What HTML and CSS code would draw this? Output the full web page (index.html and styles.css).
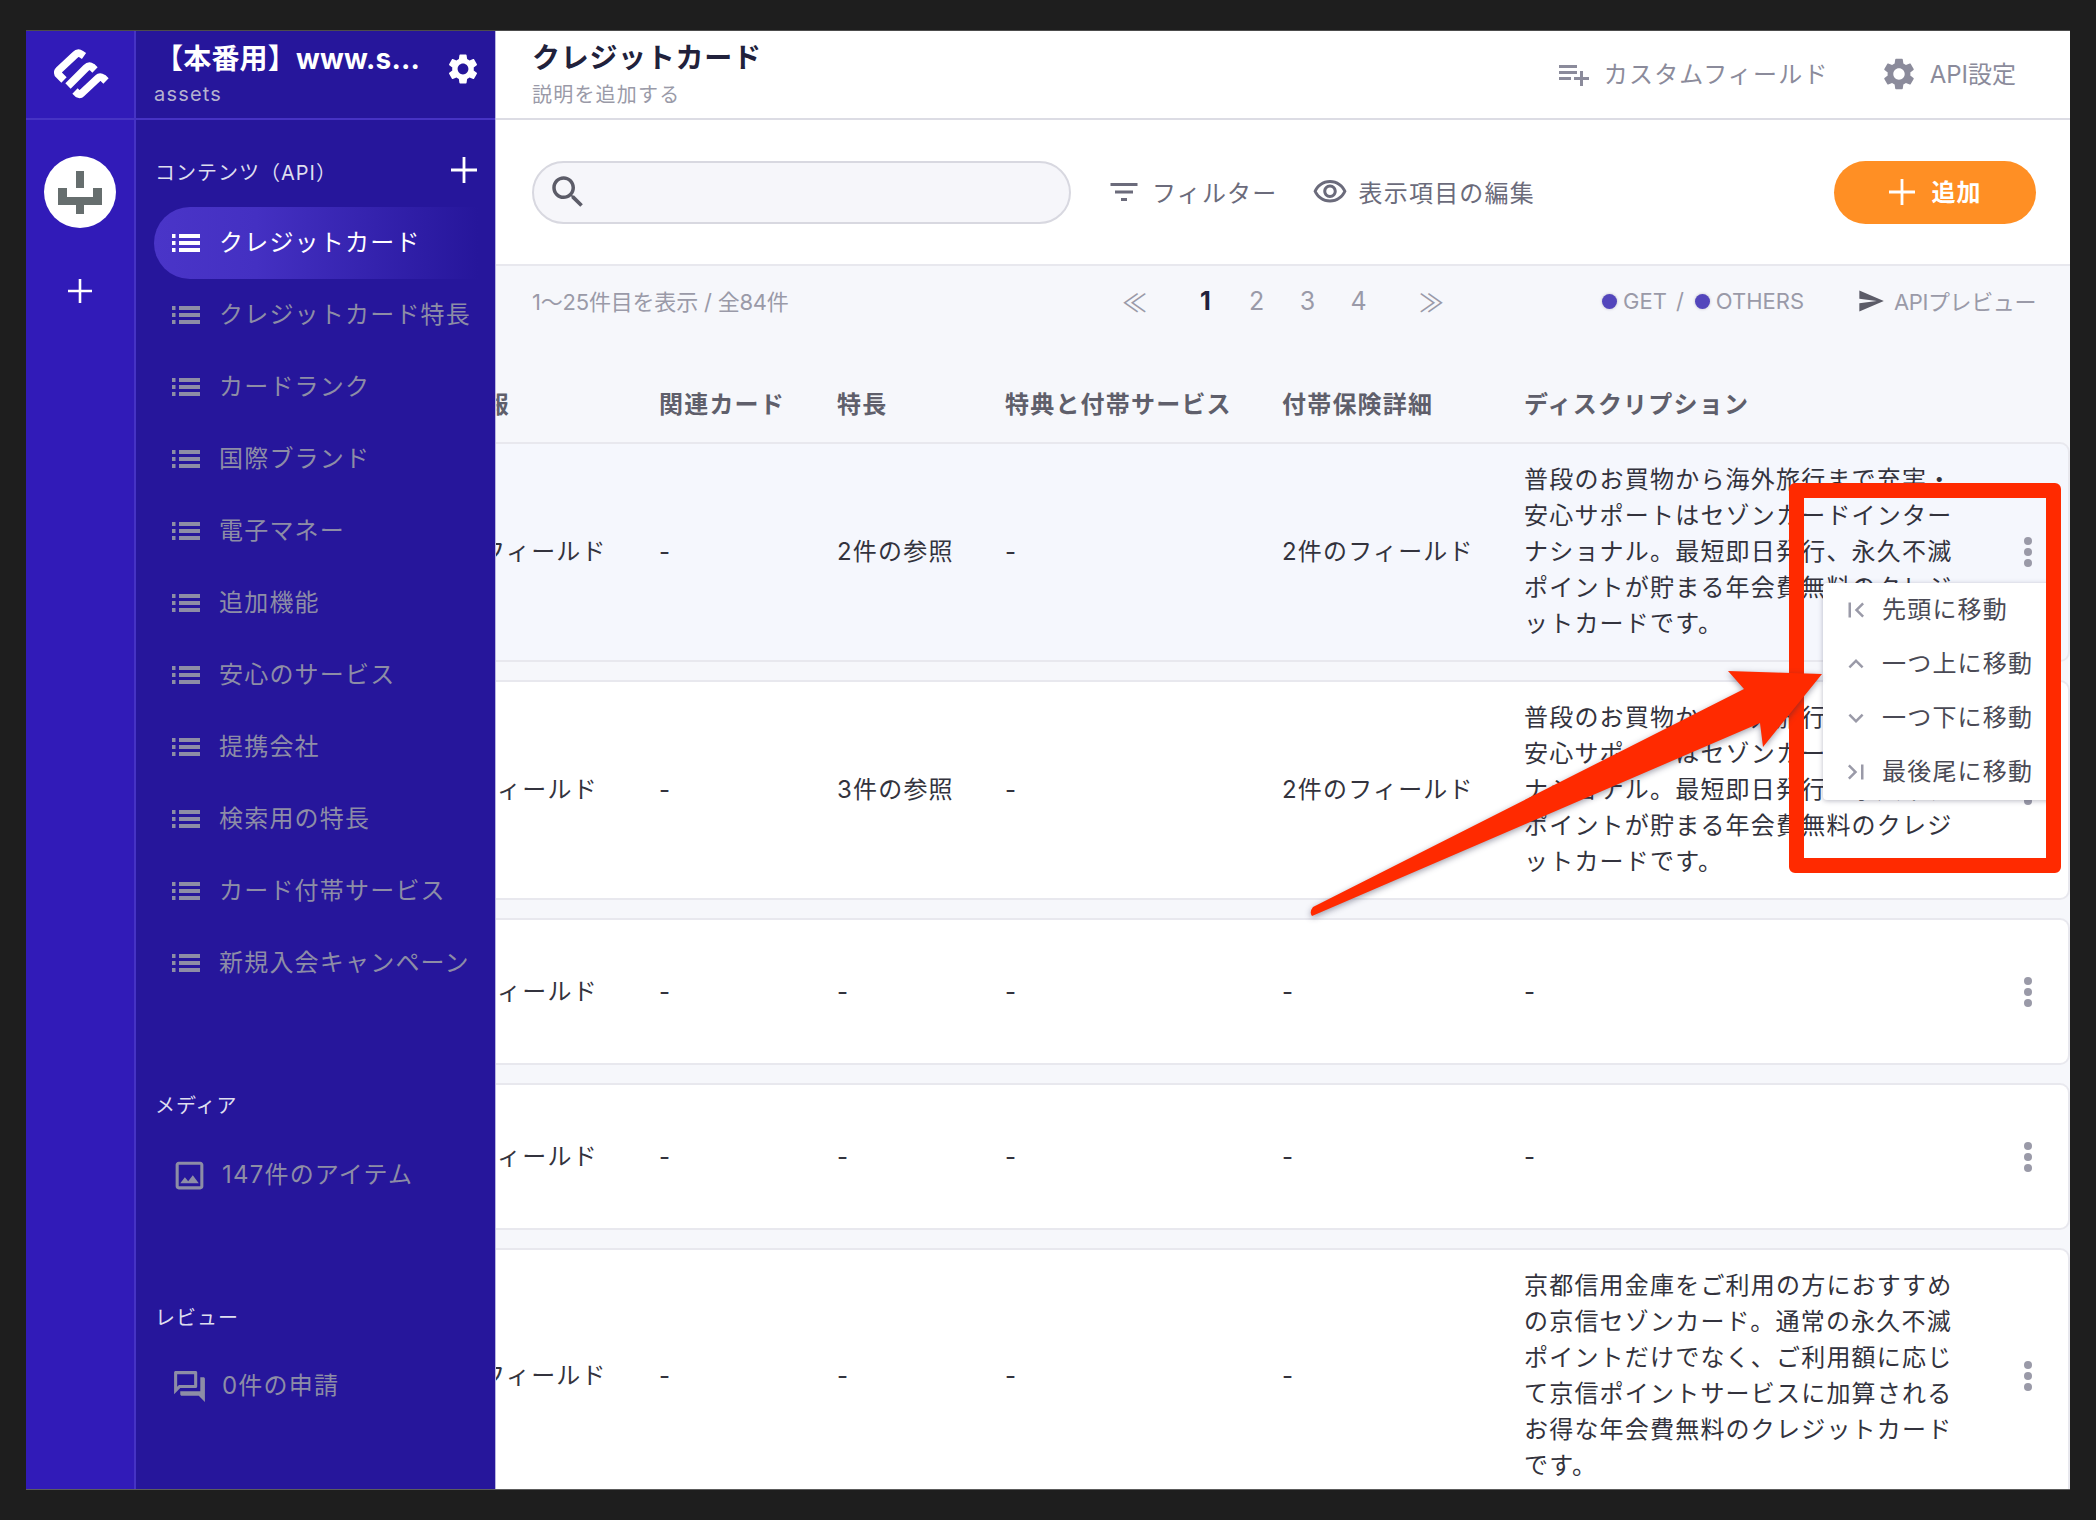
FILE: index.html
```html
<!DOCTYPE html>
<html lang="ja">
<head>
  <meta charset="UTF-8">
  <meta name="viewport" content="width=device-width, initial-scale=1.0">
  <title>クレジットカード</title>
  <link rel="stylesheet" href="styles.css">
</head>
<body>

  <svg class="sprite" aria-hidden="true">
    <symbol id="i-gear" viewBox="0 0 24 24"><path d="M19.14 12.94c.04-.3.06-.61.06-.94 0-.32-.02-.64-.07-.94l2.03-1.58c.18-.14.23-.41.12-.61l-1.92-3.32c-.12-.22-.37-.29-.59-.22l-2.39.96c-.5-.38-1.03-.7-1.62-.94l-.36-2.54c-.04-.24-.24-.41-.48-.41h-3.84c-.24 0-.43.17-.47.41l-.36 2.54c-.59.24-1.13.57-1.62.94l-2.39-.96c-.22-.08-.47 0-.59.22L2.74 8.87c-.12.21-.08.47.12.61l2.03 1.58c-.05.3-.09.63-.09.94s.02.64.07.94l-2.03 1.58c-.18.14-.23.41-.12.61l1.92 3.32c.12.22.37.29.59.22l2.39-.96c.5.38 1.03.7 1.62.94l.36 2.54c.05.24.24.41.48.41h3.84c.24 0 .44-.17.47-.41l.36-2.54c.59-.24 1.13-.56 1.62-.94l2.39.96c.22.08.47 0 .59-.22l1.92-3.32c.12-.22.07-.47-.12-.61l-2.01-1.58zM12 15.6c-1.98 0-3.6-1.62-3.6-3.6s1.62-3.6 3.6-3.6 3.6 1.62 3.6 3.6-1.62 3.6-3.6 3.6z"/></symbol>
    <symbol id="i-list" viewBox="0 0 28 18"><path d="M0 0h3.5v4H0zM7 0h21v4H7zM0 7h3.5v4H0zM7 7h21v4H7zM0 14h3.5v4H0zM7 14h21v4H7z"/></symbol>
    <symbol id="i-plus" viewBox="0 0 24 24"><path d="M10.7 0h2.6v10.7H24v2.6H13.3V24h-2.6V13.3H0v-2.6h10.7z"/></symbol>
    <symbol id="i-search" viewBox="0 0 24 24"><path d="M15.5 14h-.79l-.28-.27C15.41 12.59 16 11.11 16 9.5 16 5.91 13.09 3 9.5 3S3 5.91 3 9.5 5.91 16 9.5 16c1.61 0 3.09-.59 4.23-1.57l.27.28v.79l5 4.99L20.49 19l-4.99-5zm-6 0C7.01 14 5 11.99 5 9.5S7.01 5 9.5 5 14 7.01 14 9.5 11.99 14 9.5 14z"/></symbol>
    <symbol id="i-filter" viewBox="0 0 24 24"><path d="M10 18h4v-2h-4v2zM3 6v2h18V6H3zm3 7h12v-2H6v2z"/></symbol>
    <symbol id="i-eye" viewBox="0 0 24 24"><path d="M12 6c3.79 0 7.17 2.13 8.82 5.5C19.17 14.87 15.79 17 12 17s-7.17-2.13-8.82-5.5C4.83 8.13 8.21 6 12 6m0-2C7 4 2.73 7.11 1 11.5 2.73 15.89 7 19 12 19s9.27-3.11 11-7.5C21.27 7.11 17 4 12 4zm0 5c1.38 0 2.5 1.12 2.5 2.5S13.38 14 12 14s-2.5-1.12-2.5-2.5S10.62 9 12 9m0-2c-2.48 0-4.5 2.02-4.5 4.5S9.52 16 12 16s4.5-2.02 4.5-4.5S14.48 7 12 7z"/></symbol>
    <symbol id="i-send" viewBox="0 0 24 24"><path d="M2.01 21L23 12 2.01 3 2 10l15 2-15 2z"/></symbol>
    <symbol id="i-field" viewBox="0 0 24 24"><path d="M14 10H2v2h12v-2zm0-4H2v2h12V6zm4 8v-4h-2v4h-4v2h4v4h2v-4h4v-2h-4zM2 16h8v-2H2v2z"/></symbol>
    <symbol id="i-image" viewBox="0 0 24 24"><path d="M19 5v14H5V5h14m0-2H5c-1.1 0-2 .9-2 2v14c0 1.1.9 2 2 2h14c1.1 0 2-.9 2-2V5c0-1.1-.9-2-2-2zm-4.86 8.86l-3 3.87L9 13.14 6 17h12l-3.86-5.14z"/></symbol>
    <symbol id="i-forum" viewBox="0 0 24 24"><path d="M15 4v7H5.17L4 12.17V4h11m1-2H3c-.55 0-1 .45-1 1v14l4-4h10c.55 0 1-.45 1-1V3c0-.55-.45-1-1-1zm5 4h-2v9H6v2c0 .55.45 1 1 1h11l4 4V7c0-.55-.45-1-1-1z"/></symbol>
    <symbol id="i-first" viewBox="0 0 24 24"><path d="M18.41 16.59L13.82 12l4.59-4.59L17 6l-6 6 6 6zM6 6h2v12H6z"/></symbol>
    <symbol id="i-up" viewBox="0 0 24 24"><path d="M7.41 15.41L12 10.83l4.59 4.58L18 14l-6-6-6 6z"/></symbol>
    <symbol id="i-down" viewBox="0 0 24 24"><path d="M7.41 8.59L12 13.17l4.59-4.58L18 10l-6 6-6-6z"/></symbol>
    <symbol id="i-last" viewBox="0 0 24 24"><path d="M5.59 7.41L10.18 12l-4.59 4.59L7 18l6-6-6-6zM16 6h2v12h-2z"/></symbol>
    <symbol id="i-dots" viewBox="0 0 8 30"><circle cx="4" cy="4" r="4"/><circle cx="4" cy="15" r="4"/><circle cx="4" cy="26" r="4"/></symbol>
  </svg>

  <div class="window">

    <!-- service rail -->
    <aside class="rail">
      <div class="rail-logo">
        <svg class="logo" viewBox="0 0 60 60" fill="none" stroke="#fff" stroke-width="7.5">
          <path d="M14 35 L8 29 Q7 27 9 25 L25 10 Q28 7 31 9 L34 11"/>
          <path d="M18 41 L36 23 Q39 20 42 22 L45 25"/>
          <path d="M25 46 L28 49 Q30 50 32 48 L48 33 Q50 31 53 33 L56 36"/>
        </svg>
      </div>
      <div class="avatar">
        <svg viewBox="0 0 44 44" fill="#666e6e"><path d="M18 1h8v17h-8zM0 18h9v9h26v-9h9v17H26v9h-8v-9H0z"/></svg>
      </div>
      <svg class="rail-plus icon"><use href="#i-plus"/></svg>
    </aside>

    <!-- api list -->
    <aside class="panel">
      <div class="panel-head">
        <div class="panel-title">
          <div class="service-name">【本番用】www.s...</div>
          <div class="service-sub">assets</div>
        </div>
        <svg class="panel-gear icon"><use href="#i-gear"/></svg>
      </div>

      <div class="section-label section-first">
        <span>コンテンツ（API）</span>
        <svg class="section-plus icon"><use href="#i-plus"/></svg>
      </div>
      <ul class="nav">
        <li class="nav-item active"><svg class="nav-icon icon"><use href="#i-list"/></svg>クレジットカード</li>
        <li class="nav-item"><svg class="nav-icon icon"><use href="#i-list"/></svg>クレジットカード特長</li>
        <li class="nav-item"><svg class="nav-icon icon"><use href="#i-list"/></svg>カードランク</li>
        <li class="nav-item"><svg class="nav-icon icon"><use href="#i-list"/></svg>国際ブランド</li>
        <li class="nav-item"><svg class="nav-icon icon"><use href="#i-list"/></svg>電子マネー</li>
        <li class="nav-item"><svg class="nav-icon icon"><use href="#i-list"/></svg>追加機能</li>
        <li class="nav-item"><svg class="nav-icon icon"><use href="#i-list"/></svg>安心のサービス</li>
        <li class="nav-item"><svg class="nav-icon icon"><use href="#i-list"/></svg>提携会社</li>
        <li class="nav-item"><svg class="nav-icon icon"><use href="#i-list"/></svg>検索用の特長</li>
        <li class="nav-item"><svg class="nav-icon icon"><use href="#i-list"/></svg>カード付帯サービス</li>
        <li class="nav-item"><svg class="nav-icon icon"><use href="#i-list"/></svg>新規入会キャンペーン</li>
      </ul>

      <div class="section-label section-media"><span>メディア</span></div>
      <div class="nav-item nav-extra"><svg class="extra-icon icon"><use href="#i-image"/></svg>147件のアイテム</div>

      <div class="section-label section-review"><span>レビュー</span></div>
      <div class="nav-item nav-extra nav-review"><svg class="extra-icon icon"><use href="#i-forum"/></svg>0件の申請</div>
    </aside>

    <main class="main">
      <header class="topbar">
        <div>
          <h1 class="page-title">クレジットカード</h1>
          <div class="page-sub">説明を追加する</div>
        </div>
        <div class="top-links">
          <span class="top-link"><svg class="icon-36 icon"><use href="#i-field"/></svg>カスタムフィールド</span>
          <span class="top-link top-api"><svg class="icon-38 icon"><use href="#i-gear"/></svg>API設定</span>
        </div>
      </header>

      <div class="toolbar">
        <div class="search"><svg class="search-icon icon"><use href="#i-search"/></svg></div>
        <span class="tool tool-filter"><svg class="icon-36 icon"><use href="#i-filter"/></svg>フィルター</span>
        <span class="tool tool-eye"><svg class="icon-36 icon"><use href="#i-eye"/></svg>表示項目の編集</span>
        <button class="add-btn" type="button"><svg class="add-plus icon"><use href="#i-plus"/></svg>追加</button>
      </div>

      <div class="listbar">
        <span class="count">1〜25件目を表示 / 全84件</span>
        <div class="pager">
          <span class="pager-end">≪</span>
          <b class="page-num current">1</b>
          <span class="page-num">2</span>
          <span class="page-num">3</span>
          <span class="page-num">4</span>
          <span class="pager-end pager-next">≫</span>
        </div>
        <div class="listbar-right">
          <span class="dot"></span><span>GET</span><span class="slash">/</span><span class="dot"></span><span>OTHERS</span>
          <span class="preview"><svg class="send-icon icon"><use href="#i-send"/></svg>APIプレビュー</span>
        </div>
      </div>

      <div class="table">
        <div class="row row-head">
          <div class="head-clip">カード情報</div>
          <div>関連カード</div>
          <div>特長</div>
          <div>特典と付帯サービス</div>
          <div>付帯保険詳細</div>
          <div>ディスクリプション</div>
          <div></div>
        </div>

        <div class="row row-hover">
          <div class="cell-two">2件のフィールド</div>
          <div>-</div>
          <div>2件の参照</div>
          <div>-</div>
          <div>2件のフィールド</div>
          <div>普段のお買物から海外旅行まで充実・<br>安心サポートはセゾンカードインター<br>ナショナル。最短即日発行、永久不滅<br>ポイントが貯まる年会費無料のクレジ<br>ットカードです。</div>
          <div class="row-action"><svg class="dots icon"><use href="#i-dots"/></svg></div>
        </div>

        <div class="row">
          <div class="cell-one">1件のフィールド</div>
          <div>-</div>
          <div>3件の参照</div>
          <div>-</div>
          <div>2件のフィールド</div>
          <div>普段のお買物から海外旅行まで充実・<br>安心サポートはセゾンカードインター<br>ナショナル。最短即日発行、永久不滅<br>ポイントが貯まる年会費無料のクレジ<br>ットカードです。</div>
          <div class="row-action"><svg class="dots icon"><use href="#i-dots"/></svg></div>
        </div>

        <div class="row">
          <div class="cell-one">1件のフィールド</div>
          <div>-</div>
          <div>-</div>
          <div>-</div>
          <div>-</div>
          <div>-</div>
          <div class="row-action"><svg class="dots icon"><use href="#i-dots"/></svg></div>
        </div>

        <div class="row">
          <div class="cell-one">1件のフィールド</div>
          <div>-</div>
          <div>-</div>
          <div>-</div>
          <div>-</div>
          <div>-</div>
          <div class="row-action"><svg class="dots icon"><use href="#i-dots"/></svg></div>
        </div>

        <div class="row">
          <div class="cell-two">2件のフィールド</div>
          <div>-</div>
          <div>-</div>
          <div>-</div>
          <div>-</div>
          <div>京都信用金庫をご利用の方におすすめ<br>の京信セゾンカード。通常の永久不滅<br>ポイントだけでなく、ご利用額に応じ<br>て京信ポイントサービスに加算される<br>お得な年会費無料のクレジットカード<br>です。</div>
          <div class="row-action"><svg class="dots icon"><use href="#i-dots"/></svg></div>
        </div>
      </div>
    </main>

    <!-- row menu -->
    <ul class="row-menu">
      <li><svg class="menu-icon icon"><use href="#i-first"/></svg>先頭に移動</li>
      <li><svg class="menu-icon icon"><use href="#i-up"/></svg>一つ上に移動</li>
      <li><svg class="menu-icon icon"><use href="#i-down"/></svg>一つ下に移動</li>
      <li><svg class="menu-icon icon"><use href="#i-last"/></svg>最後尾に移動</li>
    </ul>

    <!-- annotation drawn over the screenshot -->
    <div class="mark-box"></div>
    <svg class="mark-arrow" viewBox="0 0 2044 1458">
      <path d="M1286 885 L1734 692 L1737 716 L1796 643 L1702 640 L1718 658 L1287 876 Q1283 881 1286 885 Z" fill="#ff2a00"/>
    </svg>
  </div>

</body>
</html>
```

FILE: styles.css
```css
* {
  box-sizing: border-box;
}
html, body {
  height: 100%;
}
body {
  margin: 0;
  padding: 31px 26px;
  background-color: #1e1e1e;
  font-family: Inter, "Noto Sans CJK JP", sans-serif;
  font-size: 24px;
  letter-spacing: 1.2px;
  color: #33333d;
  overflow: hidden;
}
ul {
  list-style: none;
  margin: 0;
  padding: 0;
}
.sprite {
  display: none;
}
.icon {
  fill: currentColor;
  flex: none;
}

.window {
  position: relative;
  display: flex;
  width: 2044px;
  height: 1458px;
  overflow: hidden;
  background-color: #fff;
  box-shadow: 0 1px 0 #5c5c5c, 0 -1px 0 #4c4c4c;
}

/* rail */
.rail {
  width: 110px;
  flex: none;
  background-color: #311bb8;
  border-right: 2px solid #4633c4;
  color: #fff;
  display: flex;
  flex-direction: column;
  align-items: center;
}
.rail-logo {
  width: 108px;
  height: 89px;
  flex: none;
  border-bottom: 2px solid #4633c4;
  display: flex;
  align-items: center;
  justify-content: center;
}
.logo {
  width: 60px;
  height: 60px;
}
.avatar {
  width: 72px;
  height: 72px;
  margin-top: 36px;
  border-radius: 50%;
  background-color: #fff;
  display: flex;
  align-items: center;
  justify-content: center;
}
.avatar svg {
  width: 44px;
  height: 44px;
}
.rail-plus {
  width: 24px;
  height: 24px;
  margin-top: 51px;
}

/* panel */
.panel {
  width: 359px;
  flex: none;
  background-color: #26169b;
  color: #8d8da6;
}
.panel-head {
  height: 89px;
  border-bottom: 2px solid #4633c4;
  padding-left: 18px;
  display: flex;
  color: #fff;
}
.panel-title {
  width: 291px;
}
.service-name {
  margin: 10px 0 0 1px;
  font-size: 28px;
  font-weight: 700;
  line-height: 36px;
  letter-spacing: 0.2px;
  white-space: nowrap;
}
.service-sub {
  margin-top: 5px;
  font-size: 20px;
  line-height: 24px;
  color: #b5b2cf;
}
.panel-gear {
  width: 36px;
  height: 36px;
  margin: 20px 0 0 0;
}
.section-label {
  height: 30px;
  padding: 0 18px 0 19px;
  display: flex;
  align-items: center;
  justify-content: space-between;
  font-size: 20px;
  line-height: 30px;
  letter-spacing: 1px;
  color: #dedeee;
}
.section-first {
  margin-top: 38px;
}
.section-plus {
  width: 26px;
  height: 26px;
  color: #fff;
  margin-top: -6px;
}
.section-media {
  margin-top: 92px;
}
.section-review {
  margin-top: 91px;
}
.nav {
  margin-top: 19px;
}
.nav-item {
  height: 72px;
  margin-left: 18px;
  padding: 0 0 5px 18px;
  display: flex;
  align-items: center;
  white-space: nowrap;
  border-radius: 36px 0 0 36px;
}
.nav-item.active {
  color: #fff;
  background: linear-gradient(90deg, #4a35c8 0%, #4430c2 30%, #26169b 95%);
}
.nav-icon {
  width: 28px;
  height: 18px;
  margin: 5px 19px 0 0;
}
.nav-extra {
  margin-top: 19px;
  padding: 0 0 8px 17px;
}
.nav-review {
  margin-top: 17px;
  padding-bottom: 5px;
}
.extra-icon {
  width: 37px;
  height: 37px;
  margin: 6px 14px 0 0;
}
.nav-review .extra-icon {
  margin-top: 5px;
}

/* main */
.main {
  flex: 1;
  min-width: 0;
  display: flex;
  flex-direction: column;
  border-left: 1px solid #b9b6e0;
  background-color: #f6f7fb;
  overflow: hidden;
}
.topbar {
  height: 89px;
  flex: none;
  background-color: #fff;
  border-bottom: 2px solid #dcdce4;
  padding-left: 36px;
  display: flex;
  justify-content: space-between;
}
.page-title {
  margin: 9px 0 0;
  font-size: 28px;
  font-weight: 700;
  line-height: 36px;
  letter-spacing: 0.7px;
  color: #21213b;
}
.page-sub {
  margin-top: 7px;
  font-size: 20px;
  line-height: 24px;
  color: #9a9aa8;
}
.top-links {
  display: flex;
  align-items: center;
  padding: 0 54px 4px 0;
  color: #8b8b9b;
}
.top-link {
  display: flex;
  align-items: center;
  white-space: nowrap;
}
.top-link .icon {
  margin: 2px 12px 0 0;
}
.top-api {
  margin-left: 51px;
  letter-spacing: 0;
}
.icon-36 {
  width: 36px;
  height: 36px;
}
.icon-38 {
  width: 38px;
  height: 38px;
}
.toolbar {
  height: 146px;
  flex: none;
  background-color: #fff;
  border-bottom: 2px solid #e8e8ee;
  padding: 0 34px 0 36px;
  display: flex;
  align-items: center;
  color: #6b6b7b;
}
.search {
  width: 539px;
  height: 63px;
  border: 2px solid #d8d8e0;
  border-radius: 32px;
  background-color: #f6f6fa;
  display: flex;
  align-items: center;
  padding-left: 13px;
}
.search-icon {
  width: 42px;
  height: 42px;
  color: #5c5c68;
}
.tool {
  display: flex;
  align-items: center;
  white-space: nowrap;
  padding-bottom: 2px;
}
.tool .icon {
  margin-top: 2px;
}
.tool-filter {
  margin-left: 35px;
}
.tool-filter .icon {
  margin-right: 10px;
}
.tool-eye {
  margin-left: 34px;
}
.tool-eye .icon {
  margin-right: 11px;
}
.add-btn {
  margin-left: auto;
  width: 202px;
  height: 63px;
  padding: 0 0 4px;
  border: none;
  border-radius: 32px;
  background-color: #ff8f24;
  color: #fff;
  font: inherit;
  font-weight: 700;
  letter-spacing: 1px;
  display: flex;
  align-items: center;
  justify-content: center;
}
.add-plus {
  width: 26px;
  height: 26px;
  margin: 4px 17px 0 0;
}
.listbar {
  height: 70px;
  flex: none;
  padding: 0 34px 0 36px;
  display: flex;
  align-items: center;
  font-size: 22px;
  letter-spacing: 0;
  color: #9a9aa8;
}
.count {
  width: 590px;
  flex: none;
  padding-bottom: 3px;
  letter-spacing: -0.2px;
  white-space: nowrap;
}
.pager {
  display: flex;
  align-items: center;
  font-size: 25px;
}
.pager-end {
  width: 22px;
}
.page-num {
  width: 51px;
  text-align: center;
}
.page-num.current {
  margin-left: 36px;
  color: #21213b;
  font-weight: 700;
}
.pager-next {
  margin-left: 35px;
}
.listbar-right {
  margin-left: auto;
  display: flex;
  align-items: center;
  white-space: nowrap;
}
.dot {
  width: 15px;
  height: 15px;
  margin-right: 6px;
  border-radius: 50%;
  background-color: #5346bc;
  box-shadow: 0 0 3px #b9b9c6;
}
.slash {
  margin: 0 11px 0 9px;
}
.preview {
  display: flex;
  align-items: center;
  margin-left: 53px;
  padding-bottom: 2px;
  letter-spacing: -0.4px;
}
.send-icon {
  width: 28px;
  height: 28px;
  margin: 2px 9px 0 0;
  color: #5c5c68;
}

/* table, scrolled sideways so the first column is cut by the panel */
.table {
  flex: 1;
  min-height: 0;
  overflow: hidden;
}
.row {
  display: grid;
  grid-template-columns: 245px 178px 168px 277px 242px 1fr 80px;
  align-items: center;
  width: 1656px;
  min-height: 147px;
  margin-left: -82px;
  margin-bottom: 18px;
  padding: 18px 0;
  background-color: #fff;
  border: 2px solid #e8e8ee;
  border-left: none;
  border-radius: 0 10px 10px 0;
  line-height: 36px;
  white-space: nowrap;
}
.row-head {
  min-height: 0;
  margin-bottom: 0;
  padding: 51px 0 19px;
  background-color: transparent;
  border: none;
  border-radius: 0;
  font-weight: 700;
  color: #5f5f6b;
}
.head-clip {
  margin-left: -30px;
}
.cell-two {
  margin-left: 1px;
}
.cell-one {
  margin-left: -3px;
}
.row-hover {
  background-color: #f5f7fd;
}
.row-action {
  display: flex;
  justify-content: center;
  color: #9a9aa8;
}
.dots {
  width: 8px;
  height: 30px;
}

/* menu and annotation */
.row-menu {
  position: absolute;
  left: 1797px;
  top: 552px;
  width: 232px;
  height: 217px;
  background-color: #fff;
  border-radius: 4px;
  box-shadow: 0 1px 5px rgba(60, 60, 90, 0.35);
  color: #4a4a55;
}
.row-menu li {
  height: 54px;
  display: flex;
  align-items: center;
  padding: 0 0 6px 18px;
  white-space: nowrap;
}
.menu-icon {
  width: 30px;
  height: 30px;
  margin: 6px 11px 0 0;
  color: #9a9aa8;
}
.mark-box {
  position: absolute;
  left: 1763px;
  top: 452px;
  width: 272px;
  height: 390px;
  border: 15px solid #ff2a00;
  border-radius: 6px;
}
.mark-arrow {
  position: absolute;
  left: 0;
  top: 0;
  width: 2044px;
  height: 1458px;
  filter: drop-shadow(0 2px 3px rgba(40, 40, 70, 0.45));
}
```
